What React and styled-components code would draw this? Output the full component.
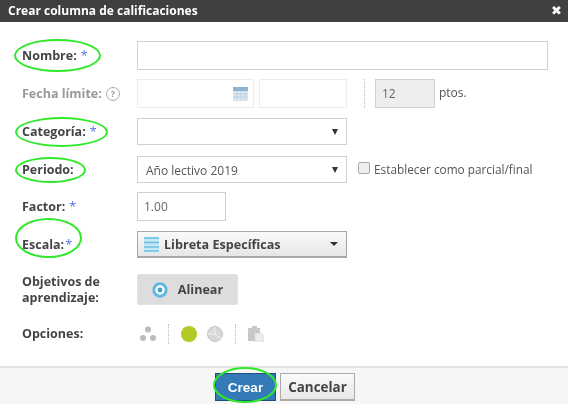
import React from "react";
import styled, { createGlobalStyle } from "styled-components";

const Global = createGlobalStyle`
  html, body { margin: 0; padding: 0; background: #fff; }
  body { width: 568px; height: 404px; overflow: hidden; font-family: "Open Sans", "DejaVu Sans", sans-serif; }
  * { box-sizing: border-box; }
`;

const Dialog = styled.div`
  width: 568px;
  height: 404px;
  display: flex;
  flex-direction: column;
  background: #fff;
  filter: blur(0.35px);
`;
const TitleBar = styled.header`
  height: 22px;
  flex: none;
  background: #404040;
  color: #fff;
  display: flex;
  align-items: center;
  justify-content: space-between;
  padding: 0 6px 2px 8px;
  font-weight: 700;
  font-size: 12px;
`;
const Close = styled.span`
  font-size: 13px;
  line-height: 1;
  font-family: "DejaVu Sans", sans-serif;
`;
const Form = styled.main`
  flex: 1;
  padding: 19px 20px 0 22px;
  display: flex;
  flex-direction: column;
`;
const Row = styled.div`
  display: flex;
  align-items: center;
  height: ${p => p.$h}px;
  margin-bottom: ${p => p.$mb}px;
`;
const Label = styled.label`
  position: relative;
  width: 115px;
  flex: none;
  display: flex;
  align-items: center;
  gap: 4px;
  font-size: 12.5px;
  font-weight: 700;
  line-height: 16px;
  color: ${p => (p.$muted ? "#999" : "#444")};
`;
const Star = styled.span`
  color: #5a6ee6;
  font-weight: 400;
  margin-left: ${p => p.$ml ?? 0}px;
`;
const Ring = styled.span`
  position: absolute;
  left: ${p => p.$l}px;
  top: ${p => p.$t}px;
  width: ${p => p.$w}px;
  height: ${p => p.$h}px;
  border: 2px solid #2fe82a;
  border-radius: 50%;
  pointer-events: none;
`;
const Input = styled.div`
  width: ${p => p.$w}px;
  height: 100%;
  flex: ${p => (p.$grow ? 1 : "none")};
  border: 1px solid ${p => (p.$faint ? "#ececec" : "#d0d0d0")};
  background: ${p => (p.$off ? "#eee" : "#fff")};
  color: #666;
  font-size: 12px;
  display: flex;
  align-items: center;
  padding: 0 6px;
  margin-left: ${p => p.$ml ?? 0}px;
`;
const DateInput = styled(Input)`
  justify-content: flex-end;
  padding: 0 5px 0 0;
`;
const Select = styled(Input)`
  justify-content: space-between;
  padding: 1px 8px 0 8px;
  color: #555;
`;
const Arrow = styled.span`
  width: 0;
  height: 0;
  border-left: 3px solid transparent;
  border-right: 3px solid transparent;
  border-top: 6px solid #333;
`;
const DotDivider = styled.div`
  width: 0;
  height: 100%;
  border-left: 1px dotted #bbb;
  margin: ${p => p.$m ?? "0 10px 0 17px"};
`;
const Unit = styled.span`
  font-size: 12px;
  color: #555;
  margin-left: 4px;
  padding-bottom: 3px;
`;
const Help = styled.span`
  width: 14px;
  height: 14px;
  border: 1px solid #aaa;
  border-radius: 50%;
  font-size: 9px;
  font-weight: 700;
  color: #999;
  display: inline-flex;
  align-items: center;
  justify-content: center;
`;
const Check = styled.span`
  width: 12px;
  height: 12px;
  border: 1px solid #aaa;
  border-radius: 2px;
  background: #eee;
  margin: 0 4px 4px 11px;
`;
const CheckText = styled.span`
  font-size: 11.8px;
  color: #555;
  padding-bottom: 1px;
`;
const ScaleButton = styled.div`
  width: 210px;
  height: 100%;
  border: 1px solid #a8a8a8;
  border-bottom-width: 2px;
  background: linear-gradient(#fafafa, #e6e6e6);
  display: flex;
  align-items: center;
  padding: 0 8px 0 6px;
  font-size: 12.6px;
  font-weight: 700;
  color: #444;
  gap: 5px;
`;
const ArrowEnd = styled(Arrow)`
  margin-left: auto;
  border-left-width: 4px;
  border-right-width: 4px;
  border-top-width: 4px;
`;
const AlignButton = styled.div`
  width: 101px;
  height: 100%;
  background: #ddd;
  border: 1px solid #e2e2e2;
  border-radius: 2px;
  display: flex;
  align-items: center;
  justify-content: center;
  gap: 10px;
  font-size: 12.6px;
  font-weight: 700;
  color: #444;
`;
const Icons = styled.div`
  display: flex;
  align-items: center;
  height: 100%;
  padding-left: 3px;
`;
const Spacer = styled.span`
  width: ${p => p.$w}px;
`;
const Footer = styled.footer`
  height: 38px;
  flex: none;
  background: #f6f6f6;
  border-top: 2px solid #e2e2e2;
  display: flex;
  justify-content: flex-start;
  align-items: flex-start;
  gap: 4px;
  padding: 5px 0 0 215px;
`;
const Primary = styled.button`
  position: relative;
  width: 61px;
  height: 28px;
  border: 1px solid #1c4f80;
  background: #337ab7;
  color: #fff;
  font: 700 13.5px "Liberation Sans", Arial, sans-serif;
  padding: 0;
`;
const Secondary = styled.button`
  width: 75px;
  height: 28px;
  border: 1px solid #aaa;
  border-bottom-width: 2px;
  background: linear-gradient(#fafafa, #e8e8e8);
  color: #444;
  font: 700 13.4px "Open Sans", sans-serif;
  padding: 0;
`;

const Calendar = () => (
  <svg width="15" height="14" viewBox="0 0 15 14">
    <rect width="15" height="14" fill="#dbe7f2" />
    <rect width="15" height="4" fill="#8fb2d0" />
    <path d="M0 7h15M0 10h15M4 4v10M8 4v10M12 4v10" stroke="#b7cbdd" strokeWidth="0.7" />
  </svg>
);
const ScaleIcon = () => (
  <svg width="15" height="15" viewBox="0 0 15 15">
    <rect width="15" height="15" fill="#c5e6f4" />
    <path d="M0 1h15M0 5.5h15M0 10h15M0 14h15" stroke="#6cbfe2" strokeWidth="1.4" />
  </svg>
);
const Target = () => (
  <svg width="16" height="16" viewBox="0 0 16 16">
    <circle cx="8" cy="8" r="6.2" fill="#fff" stroke="#62b8de" strokeWidth="3" />
    <circle cx="8" cy="8" r="2.4" fill="#3f9fd0" />
  </svg>
);
const Cluster = () => (
  <svg width="16" height="16" viewBox="0 0 16 16">
    <circle cx="8" cy="3.5" r="3" fill="#bbb" />
    <circle cx="3" cy="12" r="3" fill="#bbb" />
    <circle cx="13" cy="12" r="3" fill="#bbb" />
  </svg>
);
const GreenDot = () => (
  <svg width="16" height="16" viewBox="0 0 16 16">
    <circle cx="8" cy="8" r="8" fill="#b2c926" />
  </svg>
);
const Pie = () => (
  <svg width="16" height="16" viewBox="0 0 16 16">
    <circle cx="8" cy="8" r="7.5" fill="#d8d8d8" stroke="#c4c4c4" />
    <path d="M8 1v7l5.5 4M8 8H1" stroke="#f2f2f2" fill="none" />
  </svg>
);
const Clipboard = () => (
  <svg width="16" height="16" viewBox="0 0 16 16">
    <path d="M0 2h4V0h5v2h3v5H7v8H0z" fill="#c8c8c8" />
    <path d="M7 7h6l3 3v6H7z" fill="#ececec" stroke="#d6d6d6" strokeWidth="0.6" />
  </svg>
);

export default function App() {
  return (
    <Dialog>
      <Global />
      <TitleBar>
        <span>Crear columna de calificaciones</span>
        <Close>✖</Close>
      </TitleBar>
      <Form>
        <Row $h={29} $mb={9}>
          <Label>
            Nombre: <Star>*</Star>
            <Ring $l={-8} $t={-9} $w={87} $h={33} />
          </Label>
          <Input $grow />
        </Row>
        <Row $h={29} $mb={10}>
          <Label $muted>
            Fecha límite: <Help>?</Help>
          </Label>
          <DateInput $w={117} $faint>
            <Calendar />
          </DateInput>
          <Input $w={88} $faint $ml={5} />
          <DotDivider />
          <Input $w={60} $off>12</Input>
          <Unit>ptos.</Unit>
        </Row>
        <Row $h={27} $mb={11}>
          <Label>
            Categoría: <Star>*</Star>
            <Ring $l={-7} $t={-7} $w={93} $h={30} />
          </Label>
          <Select $w={210}>
            <span />
            <Arrow />
          </Select>
        </Row>
        <Row $h={27} $mb={9}>
          <Label>
            Periodo:
            <Ring $l={-7} $t={-5} $w={71} $h={26} />
          </Label>
          <Select $w={210}>
            <span>Año lectivo 2019</span>
            <Arrow />
          </Select>
          <Check />
          <CheckText>Establecer como parcial/final</CheckText>
        </Row>
        <Row $h={29} $mb={10}>
          <Label>
            Factor: <Star>*</Star>
          </Label>
          <Input $w={89}>1.00</Input>
        </Row>
        <Row $h={27} $mb={16}>
          <Label>
            Escala:<Star $ml={-3}>*</Star>
            <Ring $l={-7} $t={-19} $w={67} $h={40} />
          </Label>
          <ScaleButton>
            <ScaleIcon />
            Libreta Específicas
            <ArrowEnd />
          </ScaleButton>
        </Row>
        <Row $h={31} $mb={19}>
          <Label>
            Objetivos de
            <br />
            aprendizaje:
          </Label>
          <AlignButton>
            <Target />
            Alinear
          </AlignButton>
        </Row>
        <Row $h={20} $mb={0}>
          <Label>Opciones:</Label>
          <Icons>
            <Cluster />
            <DotDivider $m="0 12px 0 12px" />
            <GreenDot />
            <Spacer $w={10} />
            <Pie />
            <DotDivider $m="0 12px 0 12px" />
            <Clipboard />
          </Icons>
        </Row>
      </Form>
      <Footer>
        <Primary>
          Crear
          <Ring $l={-3} $t={-7} $w={64} $h={36} />
        </Primary>
        <Secondary>Cancelar</Secondary>
      </Footer>
    </Dialog>
  );
}
